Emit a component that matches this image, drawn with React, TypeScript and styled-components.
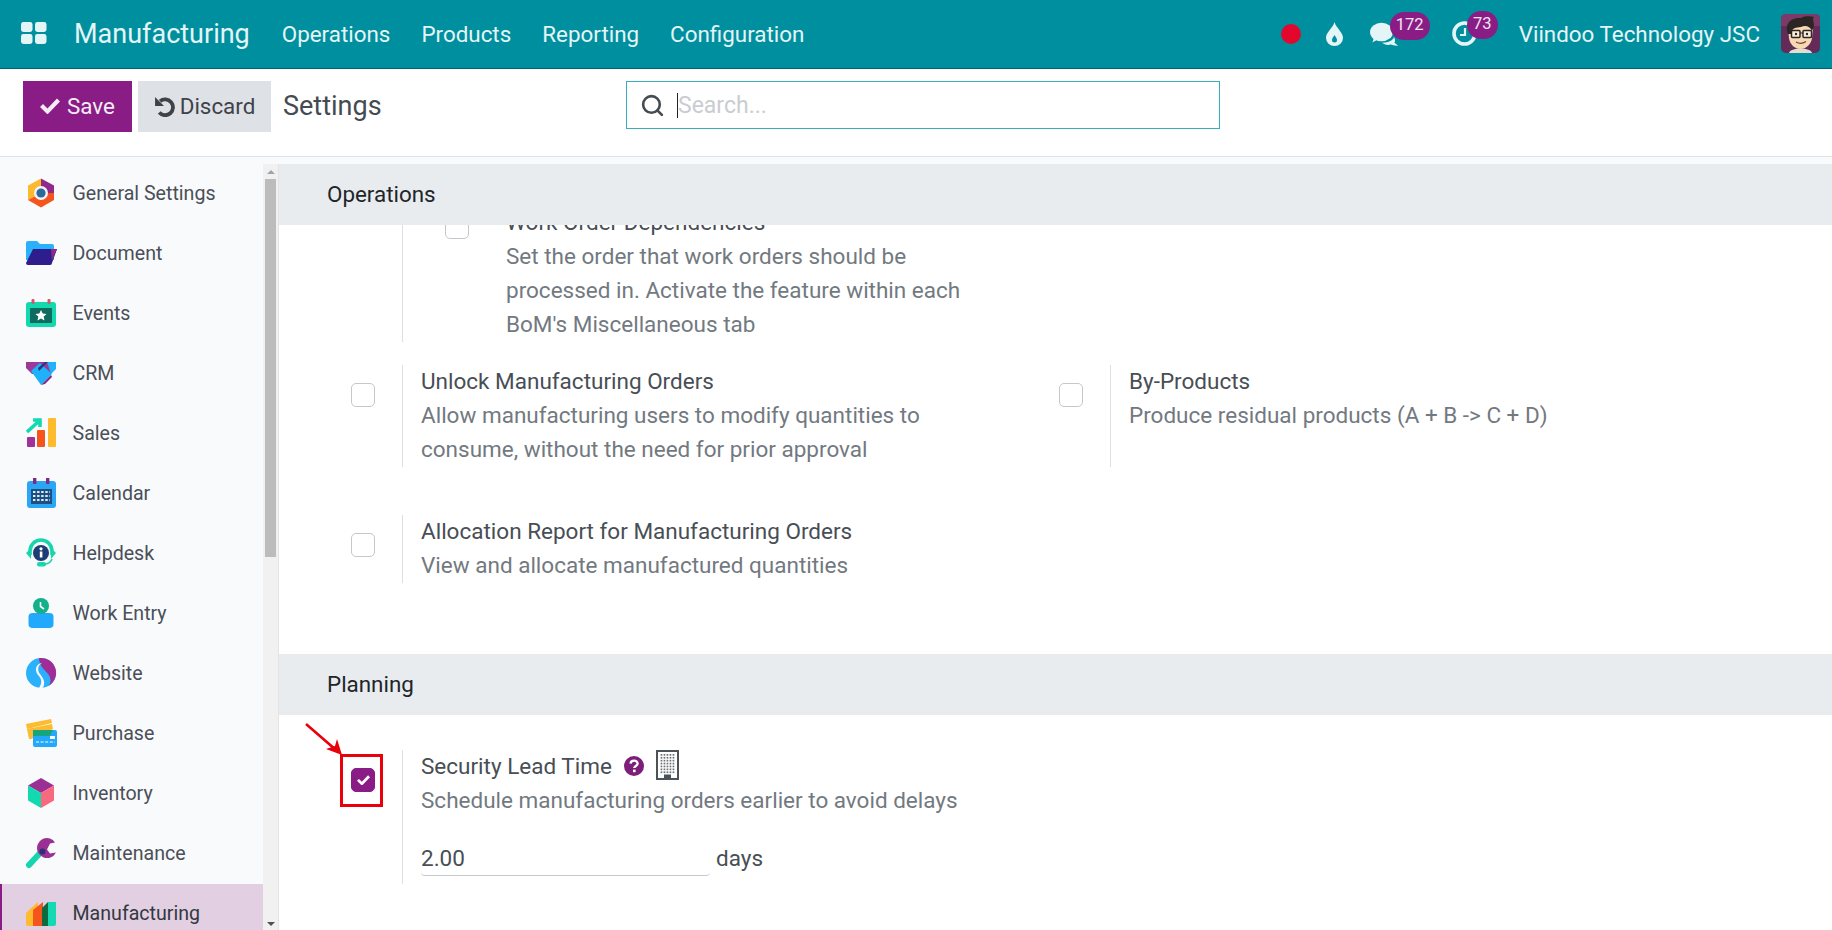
import React from "react";
import styled, { createGlobalStyle } from "styled-components";
import { Search } from "lucide-react";

const Global = createGlobalStyle`
  html, body { margin: 0; padding: 0; height: 100%; overflow: hidden; background: #fff; }
  body { font-family: Roboto, "Liberation Sans", sans-serif; }
  * { box-sizing: border-box; }
`;

const Page = styled.div`
  display: flex;
  flex-direction: column;
  height: 930px;
  width: 1832px;
  overflow: hidden;
`;

const TopBar = styled.header`
  height: 69px;
  flex: none;
  display: flex;
  align-items: center;
  background: #008f9e;
  border-bottom: 1px solid #005f69;
  color: #e4f5f7;
  padding: 0 12px 1px 21px;
`;
const AppsButton = styled.svg`
  width: 26px;
  height: 22px;
  margin-right: 27px;
  margin-top: -2px;
`;
const Brand = styled.span`
  font-size: 27px;
  margin-right: 32px;
`;
const Menu = styled.nav`
  display: flex;
  gap: 31px;
  font-size: 22.4px;
  flex: 1;
`;
const Systray = styled.div`
  display: flex;
  align-items: center;
`;
const RecordDot = styled.span`
  width: 20px;
  height: 20px;
  border-radius: 50%;
  background: #e3072e;
  margin-right: 25px;
`;
const TrayIcon = styled.span<{ $mr: number }>`
  position: relative;
  display: flex;
  margin-right: ${(p) => p.$mr}px;
`;
const Badge = styled.span<{ $left: number; $w: number }>`
  position: absolute;
  top: -10px;
  left: ${(p) => p.$left}px;
  width: ${(p) => p.$w}px;
  height: 28px;
  border-radius: 14px;
  background: #8a1d85;
  color: #efe6ef;
  font-size: 16.5px;
  line-height: 25px;
  text-align: center;
`;
const UserName = styled.span`
  font-size: 22.4px;
  margin-right: 21px;
`;
const Avatar = styled.svg`
  width: 39px;
  height: 39px;
  border-radius: 5px;
  display: block;
`;

const ControlPanel = styled.div`
  height: 88px;
  flex: none;
  display: flex;
  align-items: flex-start;
  padding: 12px 0 0 23px;
  background: #fff;
  border-bottom: 1px solid #dfe2e6;
  position: relative;
`;
const ActionButton = styled.button<{ $primary?: boolean; $w: number }>`
  width: ${(p) => p.$w}px;
  height: 51px;
  border: 0;
  padding: 0 0 1px;
  display: flex;
  align-items: center;
  justify-content: center;
  gap: ${(p) => (p.$primary ? 7 : 5)}px;
  font: 400 22.4px Roboto, sans-serif;
  background: ${(p) => (p.$primary ? "#8a1d85" : "#dee1e6")};
  color: ${(p) => (p.$primary ? "#f5ecf5" : "#3e4349")};
  margin-right: ${(p) => (p.$primary ? 6 : 12)}px;
`;
const PageTitle = styled.span`
  font-size: 27px;
  line-height: 50px;
  color: #454b52;
  width: 343px;
`;
const SearchBox = styled.div`
  width: 594px;
  height: 48px;
  border: 1.5px solid #38aebd;
  display: flex;
  align-items: center;
  padding-left: 13px;
  color: #454b52;
`;
const Caret = styled.span`
  width: 1px;
  height: 25px;
  background: #222;
  margin-left: 12px;
`;
const Placeholder = styled.span`
  font-size: 23px;
  color: #c9cdd2;
`;

const Body = styled.div`
  flex: 1;
  min-height: 0;
  display: flex;
  background: #f9fafb;
  padding-top: 7px;
`;
const Sidebar = styled.aside`
  width: 263px;
  flex: none;
  overflow: hidden;
`;
const NavItem = styled.div<{ $active?: boolean }>`
  height: 60px;
  display: flex;
  align-items: center;
  gap: 15.5px;
  padding-left: ${(p) => (p.$active ? 23 : 25)}px;
  border-left: ${(p) => (p.$active ? "2px solid #8a1d85" : "0")};
  background: ${(p) => (p.$active ? "#e2cfe2" : "transparent")};
  color: ${(p) => (p.$active ? "#33383f" : "#4a4f58")};
  font-size: 19.6px;
  padding-bottom: 2px;
`;
const NavIcon = styled.svg`
  width: 32px;
  height: 32px;
  flex: none;
`;
const ScrollTrack = styled.div`
  width: 16px;
  flex: none;
  background: #f1f1f1;
  display: flex;
  flex-direction: column;
  align-items: center;
  border-right: 1px solid #e4e4e4;
`;
const ScrollArrow = styled.span<{ $down?: boolean }>`
  width: 0;
  height: 0;
  flex: none;
  border-left: 4px solid transparent;
  border-right: 4px solid transparent;
  ${(p) => (p.$down ? "border-top: 4px solid #505050;" : "border-bottom: 4px solid #a3a3a3;")}
  margin-top: ${(p) => (p.$down ? "auto" : "6px")};
  margin-bottom: ${(p) => (p.$down ? "4px" : "5px")};
`;
const ScrollThumb = styled.span`
  width: 11px;
  height: 378px;
  background: #bcbcbc;
  flex: none;
`;

const Main = styled.main`
  flex: 1;
  min-width: 0;
  background: #fff;
  overflow: hidden;
  position: relative;
`;
const SectionHeader = styled.h2`
  margin: 0;
  height: 61px;
  padding: 0 0 1px 48px;
  display: flex;
  align-items: center;
  background: #e9ecef;
  font-size: 22.4px;
  font-weight: 400;
  color: #212529;
`;
const Clip = styled.div`
  height: 117px;
  overflow: hidden;
`;
const ScrolledRow = styled.div`
  margin-top: -19px;
  padding-left: 72px;
`;
const Row = styled.div<{ $mt: number }>`
  display: grid;
  grid-template-columns: 708px 1fr;
  padding-left: 72px;
  margin-top: ${(p) => p.$mt}px;
`;
const Setting = styled.div`
  display: flex;
  position: relative;
`;
const CheckCol = styled.div<{ $flush?: boolean }>`
  width: 51px;
  flex: none;
  padding-top: ${(p) => (p.$flush ? 0 : 18)}px;
`;
const Check = styled.span<{ $on?: boolean }>`
  display: flex;
  align-items: center;
  justify-content: center;
  width: 24px;
  height: 24px;
  border-radius: 5px;
  border: 1px solid ${(p) => (p.$on ? "#8a1d85" : "#c4c8cd")};
  background: ${(p) => (p.$on ? "#8a1d85" : "#fff")};
  color: #fff;
`;
const SettingBody = styled.div<{ $pb?: number }>`
  border-left: 1px solid #dcdfe3;
  padding-left: 18px;
  padding-bottom: ${(p) => (p.$pb ?? 0) + 1}px;
  font-size: 22.5px;
  line-height: 34px;
`;
const Title = styled.div`
  color: #484e55;
  display: flex;
  align-items: center;
  margin-top: -1px;
`;
const Desc = styled.div<{ $w?: number }>`
  color: #727980;
  ${(p) => (p.$w ? `width: ${p.$w}px;` : "")}
`;
const NestedRow = styled.div`
  display: flex;
  border-left: 1px solid #dcdfe3;
  padding-left: 42px;
`;
const NestedCheck = styled.div`
  width: 61px;
  flex: none;
  padding-top: 9px;
`;
const NestedText = styled.div`
  font-size: 22.5px;
  line-height: 34px;
  padding-bottom: 1px;
`;
const HelpIcon = styled.svg`
  width: 20px;
  height: 20px;
  margin-left: 12px;
`;
const CompanyIcon = styled.svg`
  width: 23px;
  height: 30px;
  margin-left: 12px;
  margin-top: -3px;
`;
const DaysLine = styled.div`
  display: flex;
  align-items: flex-start;
  margin-top: 24px;
  color: #484e55;
`;
const NumberField = styled.div`
  width: 289px;
  height: 35px;
  border-bottom: 1px solid #c6cacf;
  border-radius: 0 0 4px 4px;
  margin-right: 6px;
`;
const Highlight = styled.span`
  position: absolute;
  left: -11px;
  top: 4px;
  width: 43px;
  height: 53px;
  border: 3.5px solid #e8000b;
`;
const Arrow = styled.svg`
  position: absolute;
  left: -47px;
  top: -28px;
  width: 40px;
  height: 36px;
`;

const items = [
  "General Settings", "Document", "Events", "CRM", "Sales", "Calendar", "Helpdesk",
  "Work Entry", "Website", "Purchase", "Inventory", "Maintenance", "Manufacturing",
];

const glyphs: Record<string, React.ReactNode> = {
  "General Settings": (
    <>
      <path d="M16 1.5 L29 8.5 V16 H16 Z" fill="#8f2a8c" />
      <path d="M16 1.5 L3 8.5 V23 L16 16 Z" fill="#fcb92e" />
      <path d="M3 23 L16 30.5 L29 23 V16 H16 Z" fill="#f5551d" />
      <circle cx="16" cy="16" r="7" fill="#f3f4f7" />
      <circle cx="16" cy="16" r="4.6" fill="#2c6a9b" />
    </>
  ),
  Document: (
    <>
      <path d="M1 6 a2 2 0 0 1 2-2 h9 l3 3 h12 a2 2 0 0 1 2 2 v14 H1 Z" fill="#2bb0fb" />
      <path d="M8 12 H32 L27 26 a2 2 0 0 1 -2 2 H3 a2 2 0 0 1 -2 -2 Z" fill="#2e1d8c" />
      <path d="M26 12 H32 L27 24 Z" fill="#8d2a88" />
    </>
  ),
  Events: (
    <>
      <rect x="1" y="5" width="30" height="25" rx="3" fill="#12d9b0" />
      <rect x="5" y="11" width="22" height="15" fill="#0f6b5f" />
      <rect x="6.5" y="2" width="3" height="5" rx="1" fill="#d05a6c" />
      <rect x="22.5" y="2" width="3" height="5" rx="1" fill="#d05a6c" />
      <path d="M16 13 l1.7 3.6 3.9.4-2.9 2.6.8 3.9-3.5-2-3.5 2 .8-3.9-2.9-2.6 3.9-.4z" fill="#fff" />
    </>
  ),
  CRM: (
    <>
      <path d="M1 5 H31 V11 L25 17 H7 L1 11 Z" fill="#9b3a9a" />
      <path d="M22 5 H31 V12 L26 17 Z" fill="#22b1fb" />
      <path d="M6 14 L15 6 L27 17 L16 28 Z" fill="#1fb2fa" />
      <path d="M13 11 L20 5 H23 L14 14 Z" fill="#283a80" />
      <path d="M18 26 L26 18 L27 20 L20 27 L16 28 Z" fill="#7d2c85" />
    </>
  ),
  Sales: (
    <>
      <rect x="2" y="20" width="8" height="10" rx="1" fill="#a0309a" />
      <rect x="12" y="13" width="8" height="17" rx="1" fill="#f5551d" />
      <rect x="23" y="1" width="8" height="29" rx="1" fill="#fdbb2d" />
      <path d="M2 15 L13 5 M8 3 H15 V10" fill="none" stroke="#12d9b0" strokeWidth="3.6" />
    </>
  ),
  Calendar: (
    <>
      <rect x="2" y="4" width="29" height="27" rx="3" fill="#2aa6f5" />
      <rect x="6" y="12" width="21" height="15" fill="#1d4f83" />
      <rect x="8" y="1" width="3.4" height="6" fill="#7d2c85" />
      <rect x="21" y="1" width="3.4" height="6" fill="#7d2c85" />
      <path d="M8 15 h17 M8 19 h17 M8 23 h17" stroke="#dfeefa" strokeWidth="2.2" strokeDasharray="2.4 1.7" />
    </>
  ),
  Helpdesk: (
    <>
      <path d="M5 18 V14 a11 11 0 0 1 22 0 V18" fill="none" stroke="#17d6ae" strokeWidth="3.6" />
      <path d="M1 16 L6 11 V22 Z M31 16 L26 11 V22 Z" fill="#17d6ae" />
      <circle cx="16" cy="16" r="8" fill="#1d3d74" />
      <rect x="14.8" y="14.5" width="2.6" height="6" fill="#fff" />
      <circle cx="16" cy="11.8" r="1.6" fill="#fff" />
      <path d="M27 22 Q25 27 19 27" fill="none" stroke="#17d6ae" strokeWidth="1.6" />
      <rect x="12" y="25" width="9" height="4.6" rx="2.3" fill="#17d6ae" />
    </>
  ),
  "Work Entry": (
    <>
      <rect x="3.5" y="16" width="25" height="15" rx="4" fill="#22a9fb" />
      <circle cx="16" cy="9" r="8" fill="#13b08c" />
      <path d="M15.5 5 V9.5 L19 12" stroke="#fff" strokeWidth="1.6" fill="none" />
    </>
  ),
  Website: (
    <>
      <circle cx="16" cy="16" r="15" fill="#2bb0fb" />
      <path d="M14 1.1 a15 15 0 0 1 10 27.6 c3-5 1-10-2-13 c-3-3-8-8-8-14.6z" fill="#a02d97" />
      <path d="M17 6 c-4 2-5 7-2 11 c3 4 6 8 3 13.8 c-1 .2-3 .3-4 .1 c4-6 2-10-1-13 c-4-5-2-11 4-11.9z" fill="#f5f7fa" />
    </>
  ),
  Purchase: (
    <>
      <path d="M1 7 L26 2 L27 6 L2 12 Z" fill="#fdbb2d" />
      <path d="M2 12 L27 7 L28 12 L6 22 H4 Z" fill="#fdbb2d" />
      <rect x="8" y="13" width="24" height="17" rx="2" fill="#22a9fb" />
      <path d="M8 13 H28 L25 19 H8 Z" fill="#17a57f" />
      <rect x="25" y="19" width="5" height="3" fill="#fff" />
      <path d="M11 25 H30" stroke="#fff" strokeWidth="1" strokeDasharray="3 1.6" />
    </>
  ),
  Inventory: (
    <>
      <path d="M16 1 L29 8.5 L16 16 L3 8.5 Z" fill="#9a2f94" />
      <path d="M3 8.5 L16 16 V31 L3 23.5 Z" fill="#12d9b0" />
      <path d="M29 8.5 L16 16 V31 L29 23.5 Z" fill="#f9697e" />
    </>
  ),
  Maintenance: (
    <>
      <path d="M4 28 L16 15" stroke="#14d6ae" strokeWidth="6" strokeLinecap="round" />
      <path d="M25 1.5 a10 10 0 1 0 6 14 l-6 1 -3 -4 3 -6 5 -1 a10 10 0 0 0 -5 -4z" fill="#9a2f94" />
      <circle cx="17.5" cy="14.5" r="3" fill="#2d2f78" />
    </>
  ),
  Manufacturing: (
    <>
      <path d="M1 16 L13 5 V29 H3 a2 2 0 0 1 -2 -2 Z" fill="#fdbb2d" />
      <path d="M8 13 L18 5 V29 H8 Z" fill="#f5551d" />
      <path d="M17 11 L23 5 V29 H17 Z" fill="#0f6b3f" />
      <path d="M23 5 H31 V27 a2 2 0 0 1 -2 2 H23 Z" fill="#14d9b2" />
    </>
  ),
};

const Face = () => (
  <Avatar viewBox="0 0 39 39">
    <rect width="39" height="39" fill="#642a58" />
    <rect y="0" width="39" height="12" fill="#7d3a68" />
    <path d="M8 39 C9 33 30 33 31 39 Z" fill="#e7dccf" />
    <path d="M7 14 C8 8 32 8 32 15 L31 24 C30 32 23 35 19.5 35 C14 35 9 31 8 24 Z" fill="#f6d9b4" />
    <path d="M7 20 C3 10 10 3 20 4 C26 1 31 3 33 3 C31 5 33 7 33 12 L31 17 C29 12 24 11 20 13 C15 14 11 13 10 20 Z" fill="#2b2624" />
    <rect x="10.5" y="16.5" width="8.5" height="7" rx="1" fill="#fbefdc" stroke="#2b2624" strokeWidth="1.5" />
    <rect x="22" y="16.5" width="8.5" height="7" rx="1" fill="#fbefdc" stroke="#2b2624" strokeWidth="1.5" />
    <path d="M19 19 h3" stroke="#2b2624" strokeWidth="1.2" />
    <circle cx="15" cy="20" r="1.2" fill="#2b2624" />
    <circle cx="26" cy="20" r="1.2" fill="#2b2624" />
    <path d="M15 28 Q20 31 25 27.5" stroke="#70432e" strokeWidth="1.3" fill="none" />
  </Avatar>
);

const BoldCheck = ({ size }: { size: number }) => (
  <svg width={size} height={size * 0.82} viewBox="0 0 20 16.4" fill="currentColor">
    <path d="M0 9 L3 6 L7.5 10.5 L17 0.5 L20 3.6 L7.5 16.4 Z" />
  </svg>
);

const windows: [number, number][] = [];
for (let c = 0; c < 5; c++) for (let r = 0; r < 7; r++) windows.push([4.6 + c * 3, 4 + r * 2.9]);

export default function App() {
  return (
    <Page>
      <Global />
      <TopBar>
        <AppsButton viewBox="0 0 26 22" fill="#e4f5f7">
          <rect x="0" y="0" width="11.5" height="10" rx="2.4" />
          <rect x="14" y="0" width="11.5" height="10" rx="2.4" />
          <rect x="0" y="12" width="11.5" height="10" rx="2.4" />
          <rect x="14" y="12" width="11.5" height="10" rx="2.4" />
        </AppsButton>
        <Brand>Manufacturing</Brand>
        <Menu>
          <span>Operations</span>
          <span>Products</span>
          <span>Reporting</span>
          <span>Configuration</span>
        </Menu>
        <Systray>
          <RecordDot />
          <TrayIcon $mr={27}>
            <svg width="17" height="24" viewBox="0 0 17 24">
              <path fillRule="evenodd" fill="#e4f5f7" d="M8.5 0 C10 6 17 10 17 16 A8.5 8 0 0 1 0 16 C0 10 7 6 8.5 0 Z M8.5 13 C7.6 15 6 16 6 18 A2.5 2.5 0 0 0 11 18 C11 16 9.4 15 8.5 13 Z" />
            </svg>
          </TrayIcon>
          <TrayIcon $mr={53}>
            <svg width="29" height="24" viewBox="0 0 29 24" fill="#e4f5f7">
              <ellipse cx="11.5" cy="10" rx="11.5" ry="9.3" />
              <path d="M3 15 L7 18 L2 20.6 C3.5 19 3.7 17 3 15 Z" />
              <path d="M12 20.6 C18 21 23 18.5 24 15 C25 17 25.5 19 24.5 20.5 C25.5 21.8 27 23 28.5 23.6 C25 24 22.5 23 20.5 22.6 C17.5 23.4 14 22.6 12 20.6 Z" />
            </svg>
            <Badge $left={20} $w={40}>172</Badge>
          </TrayIcon>
          <TrayIcon $mr={42}>
            <svg width="25" height="25" viewBox="0 0 25 25" fill="none" stroke="#e4f5f7">
              <circle cx="12.5" cy="12.5" r="10.5" strokeWidth="3.6" />
              <path d="M13 7 V14 H8" strokeWidth="2.2" />
            </svg>
            <Badge $left={15} $w={31}>73</Badge>
          </TrayIcon>
          <UserName>Viindoo Technology JSC</UserName>
          <Face />
        </Systray>
      </TopBar>

      <ControlPanel>
        <ActionButton $primary $w={109}><BoldCheck size={20} />Save</ActionButton>
        <ActionButton $w={133}>
          <svg width="21" height="21" viewBox="0 0 20 20" fill="none">
            <path d="M5.8 5 A7.5 7.5 0 1 1 5 15.8" stroke="currentColor" strokeWidth="3.6" />
            <path d="M1 1 V9.5 H9.5 Z" fill="currentColor" />
          </svg>
          Discard
        </ActionButton>
        <PageTitle>Settings</PageTitle>
        <SearchBox>
          <Search size={25} strokeWidth={2.5} />
          <Caret />
          <Placeholder>Search...</Placeholder>
        </SearchBox>
      </ControlPanel>

      <Body>
        <Sidebar>
          {items.map((name) => (
            <NavItem key={name} $active={name === "Manufacturing"}>
              <NavIcon viewBox="0 0 32 32">{glyphs[name]}</NavIcon>
              {name}
            </NavItem>
          ))}
        </Sidebar>
        <ScrollTrack>
          <ScrollArrow />
          <ScrollThumb />
          <ScrollArrow $down />
        </ScrollTrack>
        <Main>
          <SectionHeader>Operations</SectionHeader>
          <Clip>
            <ScrolledRow>
              <Setting>
                <CheckCol $flush />
                <NestedRow>
                  <NestedCheck><Check /></NestedCheck>
                  <NestedText>
                    <Title>Work Order Dependencies</Title>
                    <Desc $w={480}>Set the order that work orders should be processed in. Activate the feature within each BoM's Miscellaneous tab</Desc>
                  </NestedText>
                </NestedRow>
              </Setting>
            </ScrolledRow>
          </Clip>
          <Row $mt={23}>
            <Setting>
              <CheckCol><Check /></CheckCol>
              <SettingBody>
                <Title>Unlock Manufacturing Orders</Title>
                <Desc $w={520}>Allow manufacturing users to modify quantities to consume, without the need for prior approval</Desc>
              </SettingBody>
            </Setting>
            <Setting>
              <CheckCol><Check /></CheckCol>
              <SettingBody>
                <Title>By-Products</Title>
                <Desc>Produce residual products (A + B -&gt; C + D)</Desc>
              </SettingBody>
            </Setting>
          </Row>
          <Row $mt={48}>
            <Setting>
              <CheckCol><Check /></CheckCol>
              <SettingBody>
                <Title>Allocation Report for Manufacturing Orders</Title>
                <Desc>View and allocate manufactured quantities</Desc>
              </SettingBody>
            </Setting>
          </Row>
          <SectionSpacer />
          <SectionHeader>Planning</SectionHeader>
          <Row $mt={35}>
            <Setting>
              <CheckCol><Check $on><BoldCheck size={13} /></Check></CheckCol>
              <Highlight />
              <Arrow viewBox="0 0 40 36">
                <path d="M2 2 L32 28" stroke="#e8000b" strokeWidth="2.6" />
                <path d="M38 33 L22 27 L31 24 L33 17 Z" fill="#e8000b" />
              </Arrow>
              <SettingBody $pb={7}>
                <Title>
                  Security Lead Time
                  <HelpIcon viewBox="0 0 20 20">
                    <circle cx="10" cy="10" r="10" fill="#7c1f78" />
                    <path d="M6.6 7.6 C6.8 3.8 13.6 3.6 13.6 7.6 C13.6 10 10.3 10 10.3 12" fill="none" stroke="#fff" strokeWidth="2.4" />
                    <rect x="9" y="13.6" width="2.6" height="2.6" fill="#fff" />
                  </HelpIcon>
                  <CompanyIcon viewBox="0 0 23 30">
                    <rect x="1" y="1" width="21" height="28" fill="none" stroke="#4b5258" strokeWidth="2" />
                    {windows.map(([x, y]) => (
                      <rect key={`${x}-${y}`} x={x} y={y} width="1.7" height="1.7" fill="#6a7076" />
                    ))}
                    <rect x="8" y="24.5" width="7" height="5" fill="#4b5258" />
                  </CompanyIcon>
                </Title>
                <Desc>Schedule manufacturing orders earlier to avoid delays</Desc>
                <DaysLine>
                  <NumberField>2.00</NumberField>
                  days
                </DaysLine>
              </SettingBody>
            </Setting>
          </Row>
        </Main>
      </Body>
    </Page>
  );
}

const SectionSpacer = styled.div`
  height: 71px;
`;
